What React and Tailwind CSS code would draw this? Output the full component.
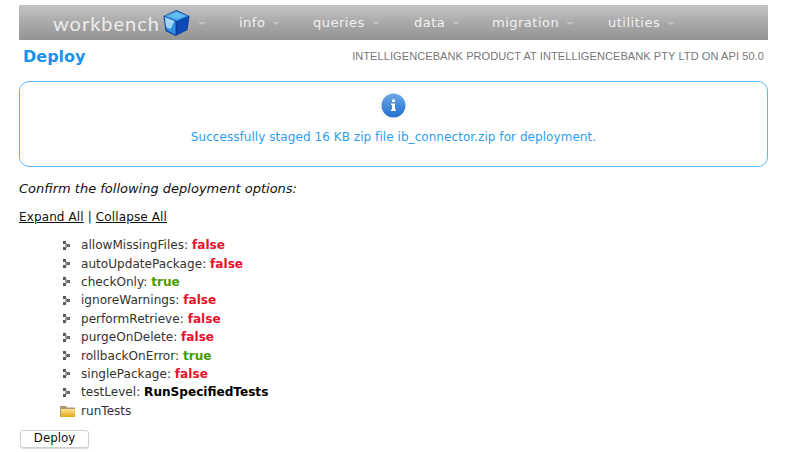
const options = [
  { name: "allowMissingFiles", value: "false" },
  { name: "autoUpdatePackage", value: "false" },
  { name: "checkOnly", value: "true" },
  { name: "ignoreWarnings", value: "false" },
  { name: "performRetrieve", value: "false" },
  { name: "purgeOnDelete", value: "false" },
  { name: "rollbackOnError", value: "true" },
  { name: "singlePackage", value: "false" },
  { name: "testLevel", value: "RunSpecifiedTests" },
];

const menus = [
  { label: "info", width: "w-[74px]" },
  { label: "queries", width: "w-[101px]" },
  { label: "data", width: "w-[78px]" },
  { label: "migration", width: "w-[116px]" },
  { label: "utilities", width: "w-[80px]" },
];

function Caret() {
  return <span className="ml-[7px] inline-block h-0 w-0 translate-y-[1px] border-x-[4px] border-t-[3px] border-x-transparent border-t-[#c2c2c2]" />;
}

function Cube() {
  return (
    <svg width="29" height="28" viewBox="0 0 28 28" className="ml-[2px]">
      <path d="M14 1 L27 7 L25 21 L13 27 L3 22 L1 7 Z" fill="#0b3f9e" />
      <path d="M14 2 L26 7 L14 12 L2 7 Z" fill="#3f9fe8" />
      <path d="M14 3 L23 7 L14 10 L5 7 Z" fill="#63bdf2" />
      <path d="M2 8 L13 12.500 L13 26 L4 21 Z" fill="#2f8fe0" />
      <path d="M2.500 8 L12 12 L8 20 L3.500 18 Z" fill="#9fd6f6" />
      <path d="M15 12.500 L26 8 L24 20 L15 26 Z" fill="#0d49b8" />
    </svg>
  );
}

function InfoIcon() {
  return (
    <svg width="25" height="25" viewBox="0 0 25 25">
      <defs>
        <linearGradient id="infoFill" x1="0" y1="0" x2="0" y2="1">
          <stop offset="0" stopColor="#6ea9e6" />
          <stop offset="1" stopColor="#1f6fd0" />
        </linearGradient>
      </defs>
      <circle cx="12.500" cy="12.500" r="12" fill="url(#infoFill)" />
      <rect x="11" y="6.500" width="3" height="2.500" fill="#fff" />
      <path d="M10 10.500 H14 V16.500 H15 V18 H10 V16.500 H11 V12 H10 Z" fill="#fff" />
    </svg>
  );
}

function Collapser() {
  return (
    <svg width="10" height="12" viewBox="0 0 10 12" className="shrink-0">
      <rect x="1" y="1" width="3" height="3" fill="#555" />
      <rect x="5" y="4" width="3" height="3" fill="#666" />
      <rect x="1" y="7" width="3" height="3" fill="#555" />
      <rect x="3" y="3" width="2" height="5" fill="#999" />
    </svg>
  );
}

function Folder() {
  return (
    <svg width="16" height="13" viewBox="0 0 16 13" className="shrink-0">
      <defs>
        <linearGradient id="folderFill" x1="0" y1="0" x2="0" y2="1">
          <stop offset="0" stopColor="#fbe38a" />
          <stop offset="1" stopColor="#e5a91b" />
        </linearGradient>
      </defs>
      <path d="M0 1 H6 L7 2.500 H15 V12 H0 Z" fill="#a89a70" />
      <rect x="1" y="4" width="14" height="8" fill="url(#folderFill)" />
    </svg>
  );
}

function valueClass(value) {
  if (value === "false") return "font-bold text-[#e8112d]";
  if (value === "true") return "font-bold text-[#4a9a00]";
  return "font-bold text-black";
}

export default function App() {
  return (
    <div className="h-[452px] w-[792px] overflow-hidden bg-white pt-[5px] font-['DejaVu_Sans',sans-serif] text-[12.100px] text-[#333]">
      <nav className="mx-[19px] flex h-[35px] w-[749px] items-center bg-gradient-to-b from-[#c4c4c4] via-[#a9a9a9] to-[#949494] text-[#f1f1f1]">
        <div className="ml-[34px] flex w-[186px] items-center">
          <span className="font-['Lato',sans-serif] text-[20px] leading-none tracking-[1px] text-[#ececec]">workbench</span>
          <Cube />
          <Caret />
        </div>
        {menus.map((menu) => (
          <div key={menu.label} className={`flex items-center text-[13px] tracking-[0.500px] ${menu.width}`}>
            {menu.label}
            <Caret />
          </div>
        ))}
      </nav>

      <header className="mx-[23px] mt-[6px] flex h-[24px] w-[741px] items-start justify-between">
        <h1 className="text-[16px] leading-[22px] font-bold text-[#1a93ec]">Deploy</h1>
        <p className="pt-[3px] font-['Liberation_Sans',sans-serif] text-[11px] leading-[14px] tracking-[0.090px] text-[#777]">
          INTELLIGENCEBANK PRODUCT AT INTELLIGENCEBANK PTY LTD ON API 50.0
        </p>
      </header>

      <section className="mx-[19px] mt-[11px] flex h-[86px] w-[749px] flex-col items-center rounded-[10px] border border-[#58b4f6] pt-[11px]">
        <InfoIcon />
        <p className="mt-[12px] text-[12px] leading-[15px] tracking-[0.060px] text-[#2f9df0]">
          Successfully staged 16 KB zip file ib_connector.zip for deployment.
        </p>
      </section>

      <p className="mx-[19px] mt-[14px] text-[13px] leading-[16px] italic text-[#111]">Confirm the following deployment options:</p>

      <div className="mx-[19px] mt-[13px] text-[12px] leading-[15px] tracking-[0.120px] text-[#111]">
        <a className="underline">Expand All</a> | <a className="underline">Collapse All</a>
      </div>

      <ul className="mt-[11.500px] ml-[62px]">
        {options.map((opt) => (
          <li key={opt.name} className="flex h-[18.400px] items-center gap-[9px] whitespace-pre leading-[15px]">
            <Collapser />
            <span>
              {opt.name}: <span className={valueClass(opt.value)}>{opt.value}</span>
            </span>
          </li>
        ))}
        <li className="-ml-[2px] flex h-[18.400px] items-center gap-[5px] leading-[15px]">
          <Folder />
          <span>runTests</span>
        </li>
      </ul>

      <button className="mt-[9.500px] ml-[20px] h-[18px] w-[69px] rounded-[3px] border border-[#cfcfcf] bg-white text-[11.800px] leading-[15px] text-[#111] shadow-[0_1px_1px_#ddd]">
        Deploy
      </button>
    </div>
  );
}
